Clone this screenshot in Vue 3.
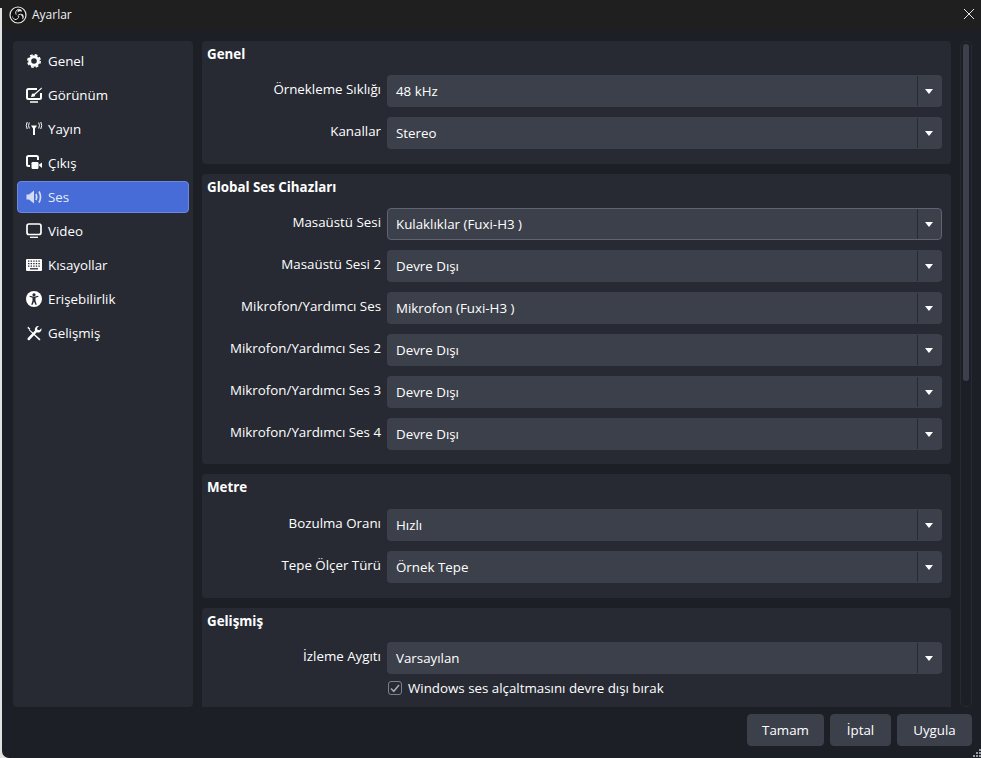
<template>
  <div class="window">
    <!-- タイトルバー -->
    <header class="titlebar">
      <svg class="logo" viewBox="0 0 18 18" width="18" height="18">
        <circle cx="9" cy="9" r="8" fill="#111" stroke="#e8e8e8" stroke-width="1.2" />
        <path d="M9.5 3.2a3 3 0 0 1 3.6 2.6 3.4 3.4 0 0 0-4.4.6A3.2 3.2 0 0 1 9.5 3.2Z" fill="#e8e8e8" />
        <path d="M14.2 9.2a3 3 0 0 1-1.2 4.2 3.4 3.4 0 0 0-1.2-4.4 3.2 3.2 0 0 1 2.4.2Z" fill="#e8e8e8" />
        <path d="M5.6 13.6a3 3 0 0 1-1.8-4 3.4 3.4 0 0 0 3 3.6 3.2 3.2 0 0 1-1.2.4Z" fill="#e8e8e8" />
        <path d="M9.5 3.2C7 4 6 6.500 7.200 8.600M14.200 9.200C12.600 7.800 10 8 8.600 9.800M5.600 13.600C7.600 13.800 9.800 12.400 9.800 10" fill="none" stroke="#e8e8e8" stroke-width="1" />
      </svg>
      <span class="window-title">Ayarlar</span>
      <svg class="close" viewBox="0 0 10 10" width="10" height="10">
        <path d="M0 0l10 10M10 0L0 10" stroke="#e6e6e6" stroke-width="1" fill="none" />
      </svg>
    </header>

    <div class="content">
      <!-- サイドバー -->
      <nav class="sidebar">
        <div v-for="item in menu" :key="item.name" class="nav-item" :class="{ active: item.name === 'Ses' }">
          <svg class="nav-icon" viewBox="0 0 16 16" width="16" height="16" v-html="item.icon"></svg>
          <span>{{ item.name }}</span>
        </div>
      </nav>

      <!-- 設定パネル -->
      <main class="scroll-area">
        <section v-for="section in sections" :key="section.title" class="panel">
          <h2>{{ section.title }}</h2>
          <div class="rows">
            <div v-for="row in section.rows" :key="row.label" class="row">
              <label>{{ row.label }}</label>
              <div class="combo" :class="{ focused: row.focused }">
                <span class="combo-text">{{ row.value }}</span>
                <span class="combo-arrow"></span>
              </div>
            </div>
            <div v-if="section.check" class="check-row">
              <span class="checkbox">
                <svg viewBox="0 0 14 14" width="14" height="14">
                  <path d="M3 7.500l2.800 2.800L11 4" fill="none" stroke="#a9abb2" stroke-width="1.500" />
                </svg>
              </span>
              <span>{{ section.check }}</span>
            </div>
          </div>
        </section>
      </main>

      <div class="scrollbar">
        <div class="thumb"></div>
      </div>
    </div>

    <footer class="footer">
      <button class="tamam">Tamam</button>
      <button class="iptal">İptal</button>
      <button class="uygula">Uygula</button>
    </footer>

    <svg class="grip" viewBox="0 0 9 9" width="9" height="9">
      <path d="M7 0h2v2H7zM4 3h2v2H4zM7 3h2v2H7zM1 6h2v2H1zM4 6h2v2H4zM7 6h2v2H7z" fill="#9a9ca3" />
    </svg>
  </div>
</template>

<script setup>
const menu = [
  {
    name: 'Genel',
    icon: '<circle cx="8" cy="8" r="4.300" fill="none" stroke="#fff" stroke-width="3"/><circle cx="8" cy="8" r="6.200" fill="none" stroke="#fff" stroke-width="1.600" stroke-dasharray="2.800 2.070"/>'
  },
  {
    name: 'Görünüm',
    icon: '<path d="M11 2H2.500A1.500 1.500 0 0 0 1 3.500v7A1.500 1.500 0 0 0 2.500 12h11a1.500 1.500 0 0 0 1.500-1.500V6" fill="none" stroke="#fff" stroke-width="2"/><path d="M15.500 0.500L8.500 6.500 6 6.800 5 10l3.500-.6.800-2L16 1.500Z" fill="#fff"/><path d="M4 15h8" stroke="#fff" stroke-width="1.500"/>'
  },
  {
    name: 'Yayın',
    icon: '<path d="M8 5.500V14" stroke="#fff" stroke-width="2"/><path d="M5 4.500h6L8 9Z" fill="#fff"/><path d="M3.300 1.500Q1.800 4.500 3.300 7.500M1.200 1Q-.6 4.500 1.200 8M12.700 1.500Q14.200 4.500 12.700 7.500M14.800 1Q16.600 4.500 14.800 8" fill="none" stroke="#fff" stroke-width="1"/>'
  },
  {
    name: 'Çıkış',
    icon: '<path d="M4 11H2.500A1.500 1.500 0 0 1 1 9.500v-7A1.500 1.500 0 0 1 2.500 1h8A1.500 1.500 0 0 1 12 2.500V5" fill="none" stroke="#fff" stroke-width="2"/><rect x="5.500" y="7" width="7" height="7" rx="1.200" fill="#fff"/><path d="M12.500 10l3.500-2.500v5.500Z" fill="#fff"/>'
  },
  {
    name: 'Ses',
    icon: '<path d="M0.500 5.500H3L8 1.500v13l-5-4H.5Z" fill="#d3dbf5"/><path d="M10 5Q11.500 8 10 11M13 2.500Q16 8 13 13.500" fill="none" stroke="#d3dbf5" stroke-width="1.700"/>'
  },
  {
    name: 'Video',
    icon: '<rect x="1" y="1" width="14" height="10.500" rx="2" fill="none" stroke="#fff" stroke-width="1.700"/><path d="M4 14.300h8" stroke="#fff" stroke-width="1.300"/>'
  },
  {
    name: 'Kısayollar',
    icon: '<rect x="0" y="2" width="16" height="12" rx="1" fill="#fff"/><path d="M2 4.200h12M2 6.700h12M2 9.200h12" stroke="#272a33" stroke-width="1.200" stroke-dasharray="1.400 1.200"/><path d="M4 11.800h8" stroke="#272a33" stroke-width="1.300"/>'
  },
  {
    name: 'Erişebilirlik',
    icon: '<circle cx="8" cy="8" r="8" fill="#fff"/><circle cx="8" cy="3.800" r="1.600" fill="#272a33"/><path d="M3.500 5.800l3 .9v3l-1.300 4h1.400L8 10.500l1.400 3.200h1.400l-1.300-4v-3l3-.9-.3-1L8 5.800l-4.200-1Z" fill="#272a33"/>'
  },
  {
    name: 'Gelişmiş',
    icon: '<path d="M2 1.500l2.300 2.300L3.500 5 1.500 3ZM3.500 4.500l11 9.800-1.200 1.200L3 5.200Z" fill="#fff"/><path d="M15.500 3.300a3.500 3.500 0 0 1-4.700 4L3.800 14.800a1.200 1.200 0 0 1-2-1.700L9 5.600a3.500 3.500 0 0 1 4-4.600L11 3l.4 1.800 1.900.4Z" fill="#fff"/>'
  }
]

const disabled = 'Devre Dışı'

const sections = [
  {
    title: 'Genel',
    rows: [
      { label: 'Örnekleme Sıklığı', value: '48 kHz' },
      { label: 'Kanallar', value: 'Stereo' }
    ]
  },
  {
    title: 'Global Ses Cihazları',
    rows: [
      { label: 'Masaüstü Sesi', value: 'Kulaklıklar (Fuxi-H3 )', focused: true },
      { label: 'Masaüstü Sesi 2', value: disabled },
      { label: 'Mikrofon/Yardımcı Ses', value: 'Mikrofon (Fuxi-H3 )' },
      { label: 'Mikrofon/Yardımcı Ses 2', value: disabled },
      { label: 'Mikrofon/Yardımcı Ses 3', value: disabled },
      { label: 'Mikrofon/Yardımcı Ses 4', value: disabled }
    ]
  },
  {
    title: 'Metre',
    rows: [
      { label: 'Bozulma Oranı', value: 'Hızlı' },
      { label: 'Tepe Ölçer Türü', value: 'Örnek Tepe' }
    ]
  },
  {
    title: 'Gelişmiş',
    rows: [{ label: 'İzleme Aygıtı', value: 'Varsayılan' }],
    check: 'Windows ses alçaltmasını devre dışı bırak'
  }
]
</script>

<style>
html,
body {
  margin: 0;
  height: 100%;
  overflow: hidden;
  background: linear-gradient(#1f1f1f 8px, #e2e2e2 8px);
}
</style>

<style scoped>
.window {
  position: relative;
  box-sizing: border-box;
  width: calc(100vw - 2px);
  height: 100vh;
  margin-left: 2px;
  display: flex;
  flex-direction: column;
  overflow: hidden;
  border-bottom-left-radius: 7px;
  background: #1d1f26;
  color: #fff;
  font-family: "Open Sans", "Noto Sans", sans-serif;
  font-size: 13.330px;
}

/* タイトルバー */
.titlebar {
  flex: none;
  height: 29px;
  display: flex;
  align-items: center;
  padding: 0 8px 1px 7px;
  background: #1f1f1f;
}

.logo {
  margin-right: 5px;
}

.window-title {
  font-size: 12px;
  color: #f2f2f2;
}

.close {
  margin-left: auto;
  margin-bottom: 2px;
  margin-right: -1px;
}

.content {
  flex: 1;
  min-height: 0;
  display: flex;
  padding: 11px 0 0 11px;
}

/* サイドバー */
.sidebar {
  flex: none;
  box-sizing: border-box;
  width: 180px;
  height: 666px;
  padding: 4px;
  border-radius: 4px;
  background: #272a33;
  display: flex;
  flex-direction: column;
  gap: 2px;
}

.nav-item {
  box-sizing: border-box;
  height: 32px;
  display: flex;
  align-items: center;
  gap: 6px;
  padding-left: 8px;
  border: 1px solid transparent;
  border-radius: 4px;
}

.nav-item.active {
  background: #476bd7;
  border-color: #6a89e2;
  color: #e8edfb;
}

.nav-icon {
  flex: none;
  overflow: visible;
}

/* 設定パネル */
.scroll-area {
  flex: none;
  width: 749px;
  height: 666px;
  margin-left: 9px;
  overflow: hidden;
}

.panel {
  background: #272a33;
  border-radius: 4px;
  padding-bottom: 15px;
  margin-bottom: 10px;
}

.panel:nth-child(2) {
  padding-bottom: 14px;
}

.panel:nth-child(3) .rows {
  padding-top: 1px;
}

h2 {
  margin: 0;
  height: 34px;
  box-sizing: border-box;
  padding: 3px 0 0 5px;
  font-size: 13.330px;
  font-weight: 700;
  line-height: 20px;
}

.rows {
  display: flex;
  flex-direction: column;
  gap: 10px;
  padding-right: 9px;
}

.row {
  display: flex;
  align-items: center;
}

label {
  flex: none;
  width: 179px;
  padding-bottom: 4px;
  text-align: right;
}

.combo {
  flex: 1;
  box-sizing: border-box;
  height: 32px;
  margin-left: 6px;
  display: flex;
  align-items: center;
  border: 1px solid transparent;
  border-radius: 4px;
  background: #3c404b;
}

.combo.focused {
  border-color: #5f6372;
}

.combo-text {
  flex: 1;
  padding-left: 8px;
}

.combo-arrow {
  position: relative;
  flex: none;
  align-self: stretch;
  width: 23px;
  border-left: 1px solid #272a33;
}

.combo-arrow::after {
  content: "";
  position: absolute;
  left: 7px;
  top: 13px;
  border-left: 4.500px solid transparent;
  border-right: 4.500px solid transparent;
  border-top: 5px solid #fff;
}

.check-row {
  display: flex;
  align-items: center;
  gap: 6px;
  margin: -8px 0 0 186px;
  height: 24px;
}

.checkbox {
  box-sizing: border-box;
  width: 14px;
  height: 14px;
  border: 1px solid #7d808a;
  border-radius: 3px;
  display: flex;
  align-items: center;
  justify-content: center;
}

.checkbox svg {
  flex: none;
}

/* スクロールバー */
.scrollbar {
  flex: none;
  box-sizing: border-box;
  width: 12px;
  height: 666px;
  margin-left: 9px;
  padding: 2px;
  border: 1px solid #272a33;
  border-radius: 5px;
}

.thumb {
  width: 6px;
  height: 337px;
  border-radius: 3px;
  background: #3c404b;
}

/* フッター */
.footer {
  flex: none;
  height: 52px;
  box-sizing: border-box;
  display: flex;
  justify-content: flex-end;
  gap: 6px;
  padding: 8px 9px 0 0;
}

button {
  height: 32px;
  padding: 0;
  border: 1px solid #3c404b;
  border-radius: 4px;
  background: #3c404b;
  color: #fff;
  font: inherit;
}

.tamam {
  width: 77px;
}

.iptal {
  width: 61px;
}

.uygula {
  width: 75px;
}

.grip {
  position: absolute;
  right: 0;
  bottom: 0;
}
</style>
